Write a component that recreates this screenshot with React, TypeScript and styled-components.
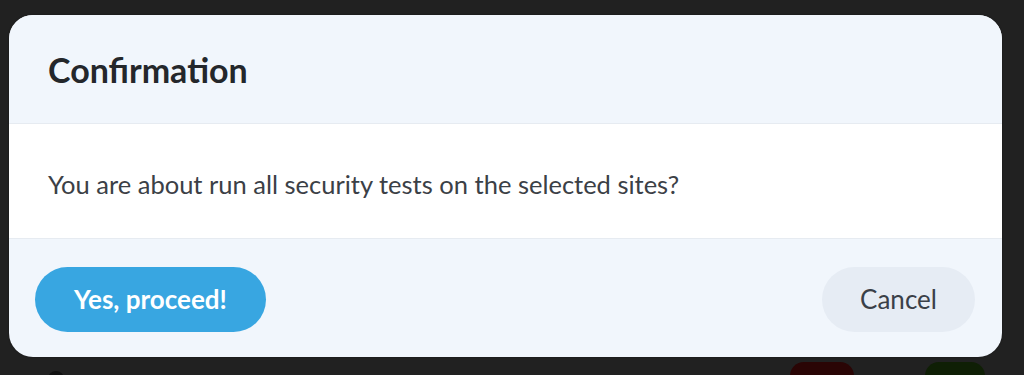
import React from "react";
import styled, { createGlobalStyle } from "styled-components";

const GlobalStyle = createGlobalStyle`
	html, body {
		margin: 0;
		padding: 0;
		background: #212121;
		font-family: Lato, "Open Sans", sans-serif;
	}
`;

const Page = styled.div`
	position: relative;
	width: 1024px;
	height: 375px;
	overflow: hidden;
	background: #212121;
`;

// dimmed page content peeking out under the dialog
const Behind = styled.div`
	position: absolute;
	left: 0;
	right: 0;
	top: 362px;
	height: 40px;
`;

const Blob = styled.div<{ $left: number; $width: number; $color: string }>`
	position: absolute;
	top: 0;
	left: ${({ $left }) => $left}px;
	width: ${({ $width }) => $width}px;
	height: 30px;
	border-radius: 14px;
	background: ${({ $color }) => $color};
`;

const Dot = styled.div`
	position: absolute;
	left: 48px;
	top: 9px;
	width: 16px;
	height: 16px;
	border-radius: 50%;
	background: #111;
`;

const Modal = styled.div`
	position: absolute;
	left: 9px;
	top: 15px;
	width: 993px;
	height: 342px;
	border-radius: 24px;
	overflow: hidden;
	display: flex;
	flex-direction: column;
	background: #f1f6fc;
	box-shadow: 0 0 2px rgba(0, 0, 0, 0.4);
`;

const Header = styled.div`
	height: 109px;
	box-sizing: border-box;
	display: flex;
	align-items: center;
	padding: 0 39px;
	border-bottom: 1px solid #e6ebf1;
	background: #f1f6fc;
`;

const Title = styled.h2`
	margin: 0;
	font-size: 34px;
	font-weight: 700;
	color: #24272b;
`;

const Body = styled.div`
	height: 115px;
	box-sizing: border-box;
	display: flex;
	align-items: center;
	padding: 5px 39px 0;
	background: #ffffff;
	border-bottom: 1px solid #e6ebf1;
`;

const Message = styled.p`
	margin: 0;
	font-size: 25.5px;
	color: #3b4046;
`;

const Footer = styled.div`
	flex: 1;
	display: flex;
	align-items: center;
	justify-content: space-between;
	padding: 0 27px 0 26px;
	margin-top: 2px;
`;

const Button = styled.button<{ $primary?: boolean }>`
	height: 65px;
	border: none;
	border-radius: 33px;
	font-family: Lato, "Open Sans", sans-serif;
	font-size: 26px;
	cursor: pointer;
	font-weight: ${({ $primary }) => ($primary ? 700 : 400)};
	width: ${({ $primary }) => ($primary ? 231 : 153)}px;
	background: ${({ $primary }) => ($primary ? "#38a6e1" : "#e6ecf4")};
	color: ${({ $primary }) => ($primary ? "#ffffff" : "#3a4048")};
`;

const App = () => (
	<Page>
		<GlobalStyle />
		<Behind>
			<Dot />
			<Blob $left={790} $width={64} $color="#2a0505" />
			<Blob $left={925} $width={60} $color="#0f1f05" />
		</Behind>
		<Modal>
			<Header>
				<Title>Confirmation</Title>
			</Header>
			<Body>
				<Message>You are about run all security tests on the selected sites?</Message>
			</Body>
			<Footer>
				<Button $primary>Yes, proceed!</Button>
				<Button>Cancel</Button>
			</Footer>
		</Modal>
	</Page>
);

export default App;
